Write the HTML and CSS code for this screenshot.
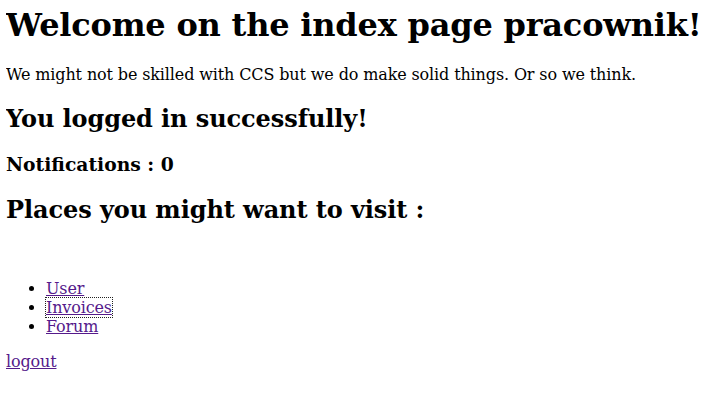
FILE: index.html
```html
<!DOCTYPE html>
<html>
<head>
<meta charset="utf-8">
<link rel="stylesheet" href="styles.css">
</head>
<body>
<h1 class="title">Welcome on the index page pracownik!</h1>
<p class="intro">We might not be skilled with CCS but we do make solid things. Or so we think.</p>
<h2 class="subtitle">You logged in successfully!</h2>
<h3>Notifications : 0</h3>
<h2 class="subtitle">Places you might want to visit :</h2>
<br>
<ul>
<li><a href="#" class="link">User</a></li>
<li><a href="#" class="link focused">Invoices</a></li>
<li><a href="#" class="link">Forum</a></li>
</ul>
<a href="#" class="link">logout</a>
</body>
</html>
```
FILE: styles.css
```css
body {
  font-family: "DejaVu Serif", serif;
  margin: 6px;
}
.title {
  margin-top: 0;
  letter-spacing: -0.2px;
}
.intro {
  letter-spacing: -0.13px;
}
.subtitle {
  letter-spacing: -0.08px;
}
.link {
  color: #551a8b;
  letter-spacing: -0.15px;
}
.focused {
  outline: 1px dotted #212121;
}
```
